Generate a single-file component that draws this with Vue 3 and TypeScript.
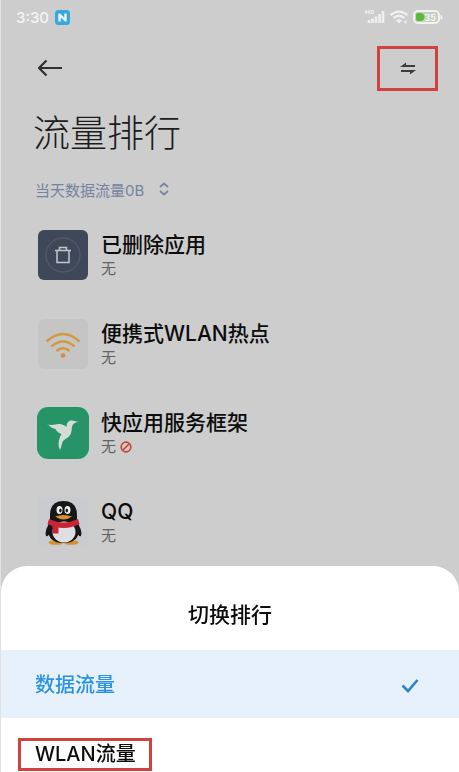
<script setup lang="ts">
import { ref } from 'vue'

type AppIcon = 'trash' | 'wifi' | 'bird' | 'penguin'

interface AppUsage {
  name: string
  usage: string
  icon: AppIcon
  blocked?: boolean
}

const apps: AppUsage[] = [
  { name: '已删除应用', usage: '无', icon: 'trash' },
  { name: '便携式WLAN热点', usage: '无', icon: 'wifi' },
  { name: '快应用服务框架', usage: '无', icon: 'bird', blocked: true },
  { name: 'QQ', usage: '无', icon: 'penguin' },
]

const options = [
  { id: 'data', label: '数据流量', marked: false },
  { id: 'wlan', label: 'WLAN流量', marked: true },
]

const selected = ref('data')
</script>

<template>
  <div class="screen">
    <div class="status">
      <span class="time">3:30</span>
      <svg class="badge" viewBox="0 0 15 15" width="15" height="15" aria-hidden="true">
        <rect width="15" height="15" rx="3.5" fill="#35a9dc" />
        <path d="M4.500 11.500V4.500L10.500 10.500V3.500" fill="none" stroke="#f0f6f8" stroke-width="2.4" stroke-linejoin="round" />
      </svg>
      <div class="indicators">
        <svg viewBox="0 0 20 16" width="20" height="16" aria-hidden="true">
          <path d="M1 1v4M4 1v4M1 3h3M6 1.500v3h1.200q1.300 0 1.300-1.500T7.200 1.500H6" fill="none" stroke="#f0f0f0" stroke-width="1.200" />
          <path d="M4 14v-3M7.500 14V9.500M11 14V7.500M14.500 14V5M18 14V2" stroke="#f0f0f0" stroke-width="2.600" />
        </svg>
        <svg viewBox="0 0 20 16" width="20" height="16" aria-hidden="true">
          <path d="M1.500 6.200q8.500-7 17 0M4.500 9q5.500-4.500 11 0" fill="none" stroke="#f0f0f0" stroke-width="2.200" />
          <path d="M7 11.300q3-2.300 6 0L10 14.500z" fill="#f0f0f0" />
          <circle cx="16.500" cy="13" r="1.500" fill="#e8e8e8" />
        </svg>
        <svg viewBox="0 0 30 14" width="30" height="14" aria-hidden="true">
          <rect x="1" y="1" width="25" height="12" rx="4" fill="#c6cfc2" stroke="#f2f2f2" stroke-width="2" />
          <path d="M27.500 4.500q2 .5 2 2.500t-2 2.500z" fill="#f2f2f2" />
          <path d="M5 3h4v8H5q-2 0-2-2V5q0-2 2-2z" fill="#55bd34" />
          <circle cx="8" cy="7" r="3.500" fill="#55bd34" />
          <text x="11.500" y="10.500" font-size="9" font-weight="500" fill="#ffffff">35</text>
        </svg>
      </div>
    </div>

    <header class="nav">
      <button class="icon-button back" type="button" aria-label="返回">
        <svg viewBox="0 0 26 18" width="26" height="18">
          <path d="M25 9H2M9.500 1.500L2 9l7.500 7.500" fill="none" stroke="#303030" stroke-width="2.200" stroke-linejoin="round" />
        </svg>
      </button>
      <button class="icon-button switch" type="button" aria-label="切换排行">
        <svg viewBox="0 0 16 12" width="16" height="12">
          <path d="M15 4H3M1 9h12" fill="none" stroke="#3c3c3c" stroke-width="1.800" />
          <path d="M0 4.900h6V0.500zM16 8.100h-6v4.400z" fill="#3c3c3c" />
        </svg>
      </button>
    </header>

    <main>
      <h1>流量排行</h1>
      <button class="period" type="button">
        <span>当天数据流量0B</span>
        <svg viewBox="0 0 10 14" width="10" height="14" aria-hidden="true">
          <path d="M1 5l4-3.500L9 5M1 9l4 3.500L9 9" fill="none" stroke="#7583a0" stroke-width="1.700" />
        </svg>
      </button>
      <ul class="apps">
        <li v-for="app in apps" :key="app.name" class="app">
          <svg v-if="app.icon === 'trash'" class="app-icon" viewBox="0 0 52 52" aria-hidden="true">
            <rect x="1" y="1" width="50" height="50" rx="6" fill="#3f4858" />
            <circle cx="26" cy="26" r="17" fill="none" stroke="#596171" stroke-width="1" />
            <path d="M18 21.500h16M22.500 21v-2.500h7V21M20 22v11.500h12V22" fill="none" stroke="#c3c7cd" stroke-width="1.500" />
          </svg>
          <svg v-else-if="app.icon === 'wifi'" class="app-icon" viewBox="0 0 52 52" aria-hidden="true">
            <rect x="1" y="1" width="50" height="50" rx="6" fill="#c5c5c5" />
            <path d="M9.500 23.500q16.500-15 33 0M14.500 28.500q11.500-10 23 0M19.500 33q6.500-5.500 13 0" fill="none" stroke="#d39a3d" stroke-width="2.600" />
            <circle cx="26" cy="37.500" r="2.300" fill="#d38b39" />
          </svg>
          <svg v-else-if="app.icon === 'bird'" class="app-icon" viewBox="0 0 52 52" aria-hidden="true">
            <rect width="52" height="52" rx="11" fill="#269467" />
            <path d="M10.500 17.500C18 19 19 16 25 17.500q3 .8 4.500 2.500c0-4 2-6.500 5-6.500 2 0 3.500 1 7.500 1.500-4 .2-6 1.500-7 4.500-.5 3 0 7-3 10-2 2-5 2.500-6.500 5.500-1 2.500-.8 5-2.500 8-2-4-2-8 0-13l1.500-3q-4-1-6-5-4-.5-8-5z" fill="#d4dcd6" />
          </svg>
          <svg v-else class="app-icon" viewBox="0 0 52 52" aria-hidden="true">
            <rect x="1" y="1" width="50" height="50" rx="6" fill="#c9cbd0" />
            <ellipse cx="19" cy="46.500" rx="7.500" ry="2.300" fill="#d9912c" />
            <ellipse cx="34" cy="46.500" rx="7.500" ry="2.300" fill="#d9912c" />
            <path d="M14 25Q7 34 9 40q2 1 5-4zM39 25q7 9 5 15-2 1-5-4z" fill="#17171a" />
            <path d="M26.500 5Q13 5 13 19v5q-2 3-2 9 0 14 15.500 14T42 33q0-6-2-9v-5Q40 5 26.500 5z" fill="#17171a" />
            <ellipse cx="27" cy="36" rx="11.500" ry="10.500" fill="#dedfe2" />
            <path d="M12 23q14.500 7 29 0l1.500 5Q27 36 10.500 28z" fill="#c92434" />
            <path d="M15.500 28l6 2v7.500h-6z" fill="#c92434" />
            <ellipse cx="22.500" cy="14" rx="3" ry="4" fill="#eeeeee" />
            <ellipse cx="30.500" cy="14" rx="3" ry="4" fill="#eeeeee" />
            <ellipse cx="23.400" cy="14.500" rx="1.200" ry="2" fill="#17171a" />
            <ellipse cx="29.800" cy="14.500" rx="1.200" ry="2" fill="#17171a" />
            <path d="M18 20.500q8.500-3 17 0-8.500 6-17 0z" fill="#d9912c" />
          </svg>
          <div class="app-text">
            <span class="app-name">{{ app.name }}</span>
            <span class="app-usage">
              {{ app.usage }}
              <svg v-if="app.blocked" viewBox="0 0 12 12" width="12" height="12" role="img" aria-label="已禁用">
                <circle cx="6" cy="6" r="4.800" fill="none" stroke="#cc4437" stroke-width="1.700" />
                <path d="M3 9l6-6" stroke="#cc4437" stroke-width="1.700" />
              </svg>
            </span>
          </div>
        </li>
      </ul>
    </main>

    <section class="sheet" role="dialog" aria-labelledby="sheet-title">
      <h2 id="sheet-title">切换排行</h2>
      <button
        v-for="option in options"
        :key="option.id"
        type="button"
        class="option"
        :class="{ active: selected === option.id }"
        :aria-pressed="selected === option.id"
        @click="selected = option.id"
      >
        <span :class="{ marked: option.marked }">{{ option.label }}</span>
        <svg v-if="selected === option.id" viewBox="0 0 18 15" width="18" height="15" aria-hidden="true">
          <path d="M1.500 7.500L7 13 16.500 2" fill="none" stroke="#2686c6" stroke-width="2.600" />
        </svg>
      </button>
    </section>
  </div>
</template>

<style>
body {
  margin: 0;
  background: #cdcdcd;
}
</style>

<style scoped>
.screen {
  box-sizing: border-box;
  height: 100vh;
  overflow: hidden;
  border-left: 1px solid #e2e2e2;
  background: #cdcdcd;
  color: #0c0c0c;
  font-family: Inter, "Noto Sans CJK SC", sans-serif;
}

button {
  margin: 0;
  padding: 0;
  border: 0;
  background: none;
  color: inherit;
  font: inherit;
  cursor: pointer;
}

svg {
  display: block;
  flex: none;
}

.status {
  display: flex;
  align-items: center;
  height: 34px;
  padding: 0 16px 0 15px;
  color: #f4f4f4;
}

.time {
  font-size: 15px;
  font-weight: 500;
}

.badge {
  margin-left: 6px;
}

.indicators {
  display: flex;
  align-items: center;
  gap: 4px;
  margin-left: auto;
}

.nav {
  display: flex;
  align-items: center;
  justify-content: space-between;
  height: 68px;
  padding: 0 21px 0 36px;
}

.icon-button {
  display: flex;
  align-items: center;
  justify-content: center;
}

.back {
  height: 44px;
}

.switch {
  box-sizing: border-box;
  width: 61px;
  height: 45px;
  border: 3px solid #d1413f;
}

h1 {
  margin: 0;
  padding: 2px 32px 0;
  font-size: 37px;
  font-weight: 300;
  line-height: 60px;
  color: #1c1c1c;
}

.period {
  display: flex;
  align-items: center;
  gap: 15px;
  height: 40px;
  margin-top: 5px;
  padding: 0 34px;
  font-size: 15px;
  color: #7583a0;
}

.apps {
  margin: 0;
  padding: 1px 36px 0;
  list-style: none;
}

.app {
  display: flex;
  align-items: center;
  gap: 12px;
  height: 89px;
}

.app-icon {
  width: 52px;
  height: 52px;
}

.app-text {
  display: flex;
  flex-direction: column;
}

.app-name {
  font-size: 21px;
  font-weight: 500;
  line-height: 28px;
}

.app-usage {
  display: flex;
  align-items: center;
  gap: 4px;
  font-size: 15px;
  line-height: 20px;
  color: #626262;
}

.sheet {
  position: fixed;
  right: 0;
  bottom: 0;
  left: 1px;
  overflow: hidden;
  border-radius: 26px 26px 0 0;
  background: #ffffff;
}

h2 {
  margin: 0;
  padding: 32px 0 18px;
  font-size: 21px;
  font-weight: 500;
  line-height: 34px;
  text-align: center;
}

.option {
  display: flex;
  align-items: center;
  justify-content: space-between;
  width: 100%;
  height: 68px;
  padding: 2px 40px 0 34px;
  font-size: 20px;
  font-weight: 500;
  line-height: 27px;
}

.option:last-child {
  height: 54px;
  padding: 18px 17px 0;
}

.active {
  background: #e6f1fc;
  color: #2b92e0;
}

.marked {
  padding: 0 13px 0 14px;
  border: 3px solid #d1413f;
}
</style>
